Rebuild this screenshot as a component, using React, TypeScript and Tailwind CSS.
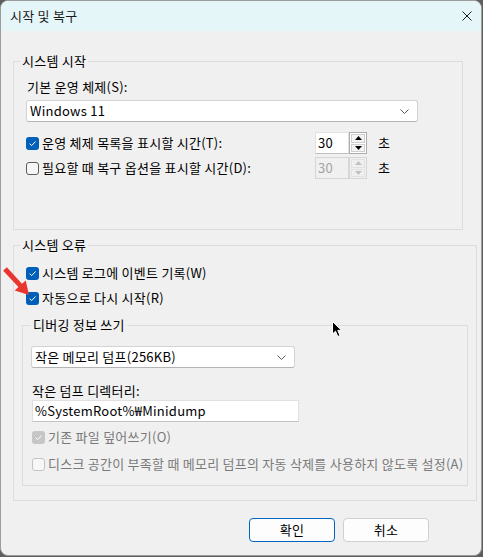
import React from "react";

type CheckProps = { on?: boolean; disabled?: boolean };

function Check({ on, disabled }: CheckProps) {
  if (on) {
    return (
      <span
        className={`flex h-[13px] w-[13px] shrink-0 items-center justify-center rounded-[3px] ${
          disabled ? "bg-[#c6c6c6]" : "bg-[#005fb8]"
        }`}
      >
        <svg width="9" height="9" viewBox="0 0 9 9">
          <path d="M1.6 4.7 L3.7 6.6 L7.5 2.5" fill="none" stroke="#ffffff" strokeWidth="1" />
        </svg>
      </span>
    );
  }
  return (
    <span
      className={`h-[13px] w-[13px] shrink-0 rounded-[3px] border ${
        disabled ? "border-[#c4c4c4] bg-[#f7f7f7]" : "border-[#5c5c5c] bg-[#f6f6f6]"
      }`}
    />
  );
}

function Chevron() {
  return (
    <svg width="9" height="5" viewBox="0 0 9 5">
      <path d="M0.5 0.5 L4.5 4.5 L8.5 0.5" fill="none" stroke="#5a5a5a" strokeWidth="1" />
    </svg>
  );
}

function Combo({ text, className }: { text: string; className: string }) {
  return (
    <div
      className={`flex h-[22px] items-center justify-between rounded-[3px] border border-[#d3d3d3] border-b-[#b4b4b4] bg-white pl-[3px] pr-[8px] ${className}`}
    >
      <span className="leading-[16px]">{text}</span>
      <Chevron />
    </div>
  );
}

function Arrow({ up, color }: { up?: boolean; color: string }) {
  return (
    <svg width="7" height="4" viewBox="0 0 7 4">
      <path d={up ? "M0 4 L3.5 0 L7 4 Z" : "M0 0 L3.5 4 L7 0 Z"} fill={color} />
    </svg>
  );
}

function Spin({ disabled }: { disabled?: boolean }) {
  const c = disabled ? "#c0c0c0" : "#000000";
  return (
    <div className="flex h-[22px]">
      <div
        className={`flex w-[34px] items-center pl-[2px] leading-[16px] ${
          disabled
            ? "border border-[#d6d6d6] bg-[#f0f0f0] text-[#a3a3a3]"
            : "border border-[#e2e2e2] border-b-[#c0c0c0] bg-white"
        }`}
      >
        30
      </div>
      <div
        className={`flex w-[18px] flex-col gap-[1px] border p-[1px] ${
          disabled ? "border-[#d6d6d6] bg-[#f0f0f0]" : "border-[#acacac] bg-white"
        }`}
      >
        <div
          className={`flex flex-1 items-center justify-center border ${
            disabled ? "border-[#e2e2e2]" : "border-[#cfcfcf] bg-[#f3f3f3]"
          }`}
        >
          <Arrow up color={c} />
        </div>
        <div
          className={`flex flex-1 items-center justify-center border ${
            disabled ? "border-[#e2e2e2]" : "border-[#cfcfcf] bg-[#f3f3f3]"
          }`}
        >
          <Arrow color={c} />
        </div>
      </div>
    </div>
  );
}

function Option({ label, on, disabled }: { label: string; on?: boolean; disabled?: boolean }) {
  return (
    <div className="flex items-center gap-[3px]">
      <Check on={on} disabled={disabled} />
      <span className={`whitespace-nowrap leading-[16px] ${disabled ? "text-[#7a7a7a]" : ""}`}>{label}</span>
    </div>
  );
}

function TimeoutRow({ label, on }: { label: string; on?: boolean }) {
  return (
    <div className="flex h-[22px] items-center">
      <div className="w-[289px]">
        <Option label={label} on={on} />
      </div>
      <Spin disabled={!on} />
      <span className="ml-[11px] leading-[16px]">초</span>
    </div>
  );
}

export default function App() {
  return (
    <div className="h-[557px] w-[483px] bg-[#5e5e5e] font-['Noto_Sans_CJK_KR','Noto_Sans',sans-serif] text-[13px] tracking-[0.25px] text-black">
      <div className="relative flex h-[556px] w-[482px] flex-col overflow-hidden rounded-[8px] border border-[#9c9c9c] bg-[#f0f0f0]">
        {/* title bar */}
        <div className="flex h-[30px] shrink-0 items-center justify-between bg-[#e5f6f8] pl-[9px] pr-[9px]">
          <span className="leading-[16px] text-[#1b1b1b]">시작 및 복구</span>
          <svg width="10" height="10" viewBox="0 0 10 10">
            <path d="M0.5 0.5 L9.5 9.5 M9.5 0.5 L0.5 9.5" stroke="#1b1b1b" strokeWidth="1" />
          </svg>
        </div>

        <div className="flex flex-col pl-[12px] pt-[22px]">
          {/* startup group */}
          <fieldset className="h-[177px] w-[450px] border border-[#dcdcdc] p-0">
            <legend className="ml-[6px] px-[2px] leading-[16px]">시스템 시작</legend>
            <div className="flex flex-col pl-[12px] pt-[10px]">
              <span className="ml-[1px] leading-[16px]">기본 운영 체제(S):</span>
              <Combo text="Windows 11" className="mt-[5px] w-[392px]" />
              <div className="mt-[10px] flex flex-col gap-[3px]">
                <TimeoutRow label="운영 체제 목록을 표시할 시간(T):" on />
                <TimeoutRow label="필요할 때 복구 옵션을 표시할 시간(D):" />
              </div>
            </div>
          </fieldset>

          {/* failure group */}
          <fieldset className="mt-[7px] h-[264px] w-[464px] border border-[#dcdcdc] p-0">
            <legend className="ml-[6px] px-[2px] leading-[16px]">시스템 오류</legend>
            <div className="flex flex-col gap-[9px] pl-[12px] pt-[12px]">
              <Option label="시스템 로그에 이벤트 기록(W)" on />
              <Option label="자동으로 다시 시작(R)" on />
            </div>

            <fieldset className="ml-[8px] mt-[11px] h-[169px] w-[446px] border border-[#dcdcdc] p-0">
              <legend className="ml-[8px] px-[2px] leading-[16px]">디버깅 정보 쓰기</legend>
              <div className="flex flex-col pl-[8px] pt-[13px]">
                <Combo text="작은 메모리 덤프(256KB)" className="w-[264px]" />
                <span className="ml-[1px] mt-[15px] leading-[16px]">작은 덤프 디렉터리:</span>
                <div className="ml-[1px] mt-[1px] flex h-[22px] w-[267px] items-center border border-[#e0e0e0] border-b-[#c4c4c4] bg-white pl-[2px] leading-[16px]">
                  %SystemRoot%₩Minidump
                </div>
                <div className="ml-[1px] mt-[7px]">
                  <Option label="기존 파일 덮어쓰기(O)" on disabled />
                </div>
                <div className="ml-[1px] mt-[11px]">
                  <Option label="디스크 공간이 부족할 때 메모리 덤프의 자동 삭제를 사용하지 않도록 설정(A)" disabled />
                </div>
              </div>
            </fieldset>
          </fieldset>
        </div>

        {/* dialog buttons */}
        <div className="mt-[17px] flex justify-end gap-[8px] pr-[52px]">
          <button className="h-[24px] w-[86px] rounded-[4px] border border-[#0067c0] bg-[#fdfdfd] leading-[16px]">
            확인
          </button>
          <button className="h-[24px] w-[86px] rounded-[4px] border border-[#d0d0d0] bg-[#fdfdfd] leading-[16px]">
            취소
          </button>
        </div>

        {/* red pointer marking the restart option */}
        <svg className="absolute left-[1px] top-[263px]" width="30" height="34" viewBox="0 0 30 34">
          <path
            d="M4.84 3.3 L20 19.8 L23.7 16.4 L27 31 L12.7 26.5 L16.4 23.1 L1.16 6.7 Z"
            fill="#e8352f"
          />
        </svg>

        {/* mouse pointer */}
        <svg className="absolute left-[331px] top-[320px]" width="11" height="18" viewBox="0 0 11 18">
          <path
            d="M0.5 0.5 L0.5 13 L3.5 10.2 L5.8 15.5 L8 14.6 L5.8 9.4 L9.6 9.4 Z"
            fill="#000000"
            stroke="#ffffff"
            strokeWidth="1"
          />
        </svg>
      </div>
    </div>
  );
}
